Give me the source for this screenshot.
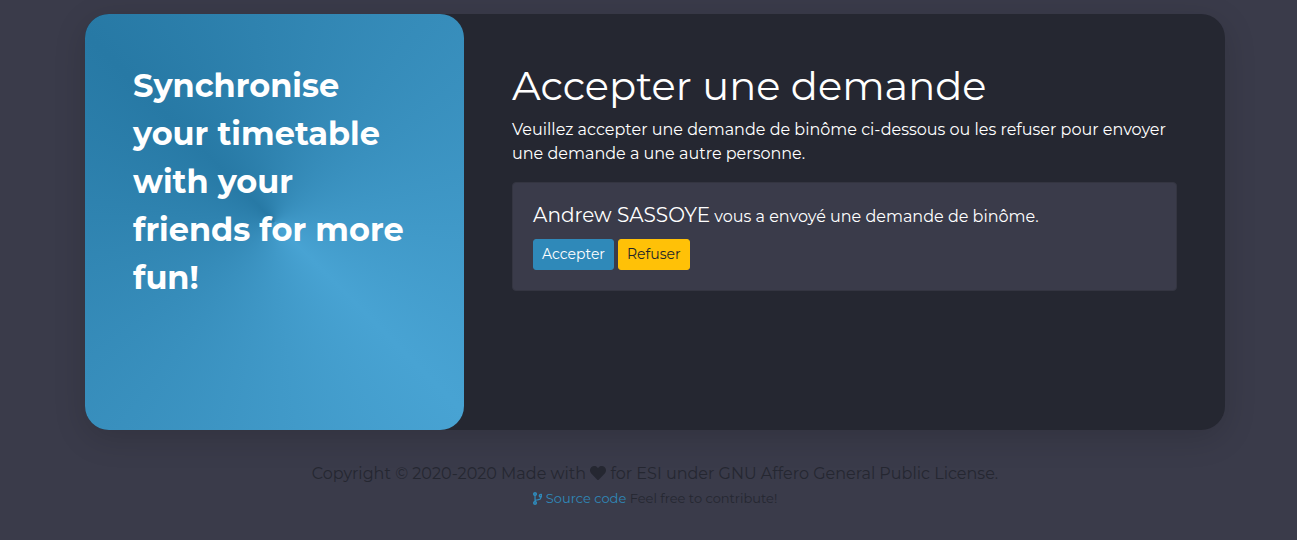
<div class="page">
  <main class="container">
    <div class="panel">
      <aside class="intro">
        <h2>Synchronise your timetable with your friends for more fun!</h2>
      </aside>
      <section class="content">
        <h1>Accepter une demande</h1>
        <p>Veuillez accepter une demande de binôme ci-dessous ou les refuser pour envoyer une demande a une autre personne.</p>
        <div class="request">
          <div class="message"><span class="name">Andrew SASSOYE</span> vous a envoyé une demande de binôme.</div>
          <div class="actions">
            <button class="accept" type="button">Accepter</button>
            <button class="refuse" type="button">Refuser</button>
          </div>
        </div>
      </section>
    </div>
  </main>
  <footer>
    <div>Copyright © 2020-2020 Made with
      <svg class="heart" viewBox="0 0 512 512" aria-hidden="true"><path fill="currentColor" d="M462.3 62.6C407.500 15.900 326 24.300 275.700 76.200L256 96.500l-19.700-20.300C186.100 24.300 104.500 15.900 49.700 62.600c-62.800 53.600-66.100 149.800-9.900 207.900l193.500 199.800c12.500 12.900 32.800 12.900 45.300 0l193.500-199.800c56.300-58.100 53-154.300-9.800-207.900z"/></svg>
      for ESI under GNU Affero General Public License.</div>
    <small>
      <a href="#source"><svg class="branch" viewBox="0 0 384 512" aria-hidden="true"><path fill="currentColor" d="M384 144c0-44.200-35.800-80-80-80s-80 35.800-80 80c0 36.400 24.300 67.100 57.500 76.800-.6 16.100-4.200 28.500-11 36.900-15.400 19.200-49.300 22.400-85.200 25.700-28.200 2.600-57.400 5.400-81.300 16.900v-144c32.500-10.200 56-40.500 56-76.300 0-44.200-35.800-80-80-80S0 35.800 0 80c0 35.800 23.500 66.100 56 76.300v199.300C23.500 365.900 0 396.200 0 432c0 44.200 35.800 80 80 80s80-35.800 80-80c0-34-21.200-63.100-51.200-74.600 3.100-5.200 7.800-9.800 14.900-13.400 16.200-8.200 40.400-10.400 66.100-12.800 42.200-3.900 90-8.400 118.200-43.400 14-17.400 21.100-39.800 21.600-67.900 31.600-10.800 54.400-40.700 54.400-75.900zM80 64c8.800 0 16 7.200 16 16s-7.200 16-16 16-16-7.200-16-16 7.200-16 16-16zm0 384c-8.800 0-16-7.200-16-16s7.200-16 16-16 16 7.200 16 16-7.200 16-16 16zm224-320c8.800 0 16 7.200 16 16s-7.200 16-16 16-16-7.200-16-16 7.200-16 16-16z"/></svg> Source code</a>
      Feel free to contribute!
    </small>
  </footer>
</div>

<style>
  :global(body) { margin: 0; background: #3a3b4a; }
  .page {
    font: 400 16px/24px Montserrat, Inter, sans-serif;
    color: #fff;
    padding: 14px 0 28px 13px;
  }
  .container { max-width: 1140px; margin: 0 auto; }
  .panel {
    display: flex;
    min-height: 416px;
    border-radius: 24px;
    background: #252731;
    box-shadow: 0 8px 32px rgba(0, 0, 0, 0.15);
  }
  .intro {
    box-sizing: border-box;
    flex: 0 0 33.25%;
    padding: 48px;
    border-radius: 24px;
    background: conic-gradient(from 135deg, #48a3d3, #2779a5 50%, #48a3d3);
  }
  h2 { margin: 0; font-size: 32px; line-height: 48px; font-weight: 700; }
  .content { flex: 1; padding: 48px; }
  h1 { margin: 0 0 8px; font-size: 40px; line-height: 48px; font-weight: 400; }
  p { margin: 0 0 16px; }
  .request { padding: 20px; border: 1px solid #343541; border-radius: 4px; background: #3a3b4a; }
  .name { font-size: 20px; }
  .actions { display: flex; gap: 4px; margin-top: 10px; }
  button { font: inherit; font-size: 14px; line-height: 21px; padding: 4px 8px; border: 1px solid; border-radius: 3px; }
  .accept { color: #fff; background: #2f89b9; border-color: #2f89b9; }
  .refuse { color: #212529; background: #ffc107; border-color: #ffc107; }
  footer { padding-top: 32px; text-align: center; color: #252731; }
  small { font-size: 13px; }
  a { color: #2f89b9; text-decoration: none; }
  svg { height: 1em; vertical-align: -2px; }
</style>
